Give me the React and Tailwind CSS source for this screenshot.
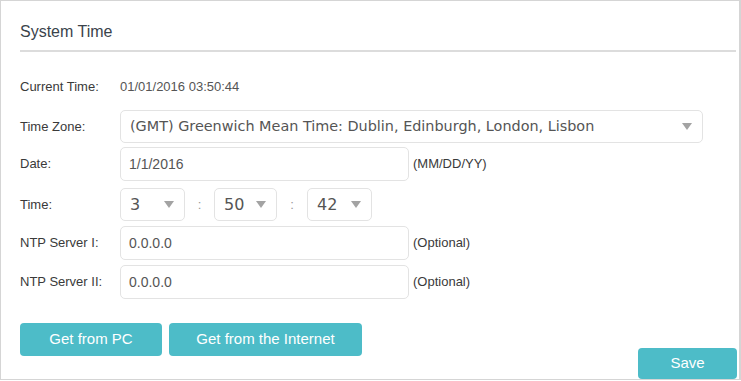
import React from "react";

// Small grey triangle used by every dropdown
function Caret() {
    return (
        <svg width="10" height="7" viewBox="0 0 10 7" className="shrink-0">
            <path d="M0 0 L10 0 L5 7 Z" fill="#a3a3a3" />
        </svg>
    );
}

function Select({ value, className = "" }) {
    return (
        <div
            className={`flex items-center justify-between h-[33px] pl-[9px] pr-[10px] border border-[#e3e3e3] rounded-[5px] bg-white text-[#555] font-['DejaVu_Sans',sans-serif] ${className}`}
        >
            <span className="truncate">{value}</span>
            <Caret />
        </div>
    );
}

function Input({ value }) {
    return (
        <div className="flex items-center w-[289px] h-[34px] px-[8px] border border-[#e3e3e3] rounded-[5px] bg-white text-[14px] text-[#555]">
            {value}
        </div>
    );
}

function Row({ label, children, className = "" }) {
    return (
        <div className={`flex items-center ${className}`}>
            <div className="w-[100px] shrink-0 text-[13px] text-[#3a3a3a]">{label}</div>
            {children}
        </div>
    );
}

export default function App() {
    return (
        <div className="w-[741px] h-[381px] bg-white font-['Liberation_Sans',Arial,sans-serif]">
            <div className="flex flex-col w-[741px] h-[380px] pl-[19px] pr-[3px] border border-r-2 border-[#d5d5d5]">
                {/* Heading */}
                <div className="pt-[21px] pb-[8px] border-b-2 border-[#dcdcdc]">
                    <h1 className="text-[16px] leading-[20px] text-[#3a434b]">System Time</h1>
                </div>

                <Row label="Current Time:" className="mt-[21px] h-[28px]">
                    <span className="text-[13px] text-[#555]">01/01/2016 03:50:44</span>
                </Row>

                <Row label="Time Zone:" className="mt-[9px]">
                    <Select
                        value="(GMT) Greenwich Mean Time: Dublin, Edinburgh, London, Lisbon"
                        className="w-[583px] text-[14.4px]"
                    />
                </Row>

                <Row label="Date:" className="mt-[4px]">
                    <Input value="1/1/2016" />
                    <span className="ml-[4px] text-[13px] text-[#3a3a3a]">(MM/DD/YY)</span>
                </Row>

                <Row label="Time:" className="mt-[7px]">
                    <Select value="3" className="w-[65px] text-[16px]" />
                    <span className="w-[29px] text-center text-[13px] text-[#999]">:</span>
                    <Select value="50" className="w-[63px] text-[16px]" />
                    <span className="w-[30px] text-center text-[13px] text-[#999]">:</span>
                    <Select value="42" className="w-[65px] text-[16px]" />
                </Row>

                <Row label="NTP Server I:" className="mt-[5px]">
                    <Input value="0.0.0.0" />
                    <span className="ml-[4px] text-[13px] text-[#3a3a3a]">(Optional)</span>
                </Row>

                <Row label="NTP Server II:" className="mt-[5px]">
                    <Input value="0.0.0.0" />
                    <span className="ml-[4px] text-[13px] text-[#3a3a3a]">(Optional)</span>
                </Row>

                {/* Action buttons */}
                <div className="flex items-start justify-between mt-[24px]">
                    <div className="flex gap-[7px]">
                        <button className="w-[142px] h-[33px] rounded-[4px] bg-[#4dbcc8] text-[15px] text-white">
                            Get from PC
                        </button>
                        <button className="w-[193px] h-[33px] rounded-[4px] bg-[#4dbcc8] text-[15px] text-white">
                            Get from the Internet
                        </button>
                    </div>
                    <button className="mt-[25px] mr-[-1px] w-[99px] h-[31px] rounded-[4px] bg-[#4dbcc8] text-[15px] text-white">
                        Save
                    </button>
                </div>
            </div>
        </div>
    );
}
